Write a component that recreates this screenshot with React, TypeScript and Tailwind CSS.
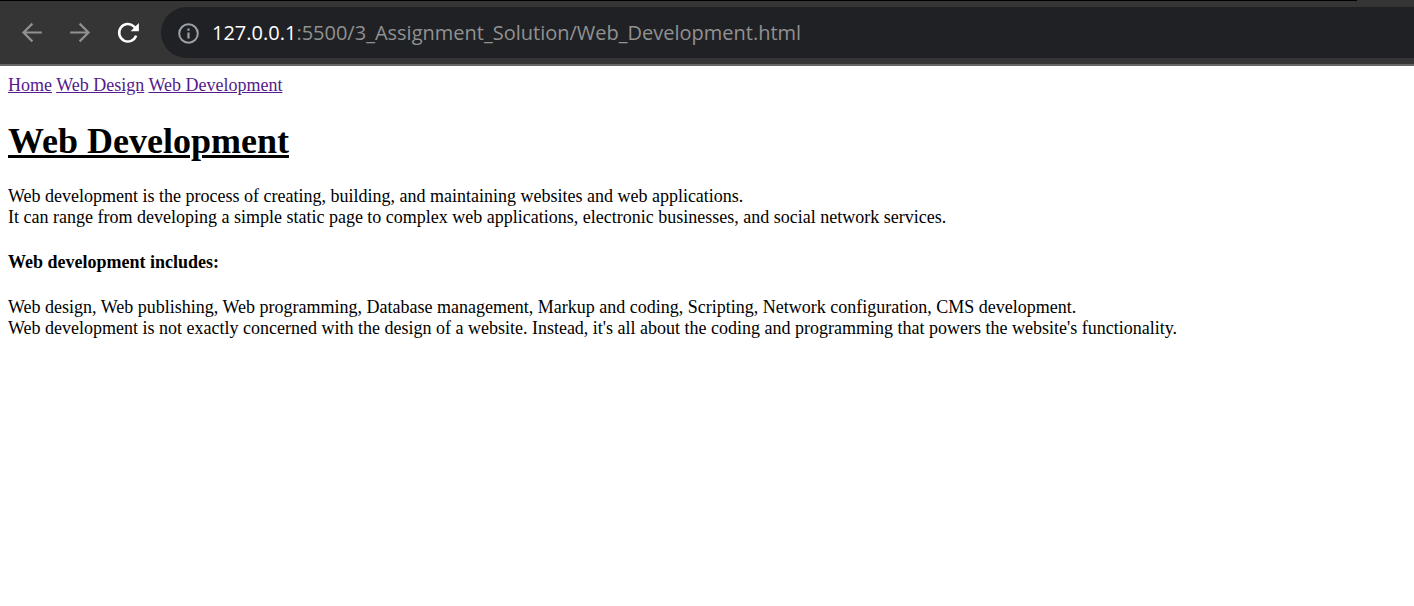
import { useState } from "react";

function BrowserBar() {
  const [path, setPath] = useState(":5500/3_Assignment_Solution/Web_Development.html");

  return (
    <header className="border-b-2 border-[#666666] bg-[#353535]">
      <div className="mr-[57px] h-px bg-black" />
      <div className="flex items-center py-[6px] pl-5">
        <div className="flex items-center gap-6">
          <button type="button" aria-label="Back" className="size-6">
            <svg viewBox="0 0 24 24" className="size-6" fill="none" stroke="#919191" strokeWidth="2.2">
              <path d="M21.8 11.5H3.6M12.4 2.6l-8.9 8.9 8.9 8.9" />
            </svg>
          </button>
          <button type="button" aria-label="Forward" className="size-6">
            <svg viewBox="0 0 24 24" className="size-6" fill="none" stroke="#919191" strokeWidth="2.2">
              <path d="M2.2 11.5h18.2M11.6 2.6l8.9 8.9-8.9 8.9" />
            </svg>
          </button>
          <button type="button" aria-label="Reload" className="size-6">
            <svg viewBox="0 0 24 24" className="size-6" fill="none" stroke="#ffffff" strokeWidth="2.5">
              <path d="M20.1 14.6A8.7 8.7 0 1 1 17.8 5.4L20 7.6" />
              <path d="M22.9 2v8.3h-8.3z" fill="#ffffff" stroke="none" />
            </svg>
          </button>
        </div>
        <div className="ml-[21px] flex h-[51px] min-w-0 flex-1 items-center rounded-l-full bg-[#202124] pl-4">
          <button type="button" aria-label="View site information" className="mr-[11px] size-6 shrink-0">
            <svg viewBox="0 0 24 24" className="size-6" fill="none" stroke="#9aa0a6" strokeWidth="2">
              <circle cx="11.5" cy="12.5" r="9.3" />
              <path d="M11.5 11.5v6M11.5 7.5v2.2" strokeWidth="2.2" />
            </svg>
          </button>
          <label htmlFor="address" className="font-['Open_Sans','Noto_Sans',sans-serif] text-[20px] leading-7 text-white">
            127.0.0.1
          </label>
          <input
            id="address"
            type="text"
            value={path}
            onChange={(event) => setPath(event.target.value)}
            spellCheck={false}
            className="min-w-0 flex-1 bg-transparent font-['Open_Sans','Noto_Sans',sans-serif] text-[20px] leading-7 text-[#919191] outline-none"
          />
        </div>
      </div>
    </header>
  );
}

export default function App() {
  return (
    <div className="min-h-screen bg-white font-['Liberation_Serif',serif] text-[18px] leading-[21px] text-black">
      <BrowserBar />
      <main className="px-2 pt-[9px]">
        <nav className="text-[#551a8b]">
          <a className="underline" href="#home">Home</a>{" "}
          <a className="underline" href="#web-design">Web Design</a>{" "}
          <a className="underline" href="#web-development">Web Development</a>
        </nav>
        <h1 className="mt-6 text-[36px] leading-[42px] font-bold underline">Web Development</h1>
        <p className="mt-6">
          Web development is the process of creating, building, and maintaining websites and web applications.
          <br />
          It can range from developing a simple static page to complex web applications, electronic businesses, and
          social network services.
        </p>
        <h4 className="mt-6 font-bold">Web development includes:</h4>
        <p className="mt-6">
          Web design, Web publishing, Web programming, Database management, Markup and coding, Scripting, Network
          configuration, CMS development.
          <br />
          Web development is not exactly concerned with the design of a website. Instead, it's all about the coding and
          programming that powers the website's functionality.
        </p>
      </main>
    </div>
  );
}
